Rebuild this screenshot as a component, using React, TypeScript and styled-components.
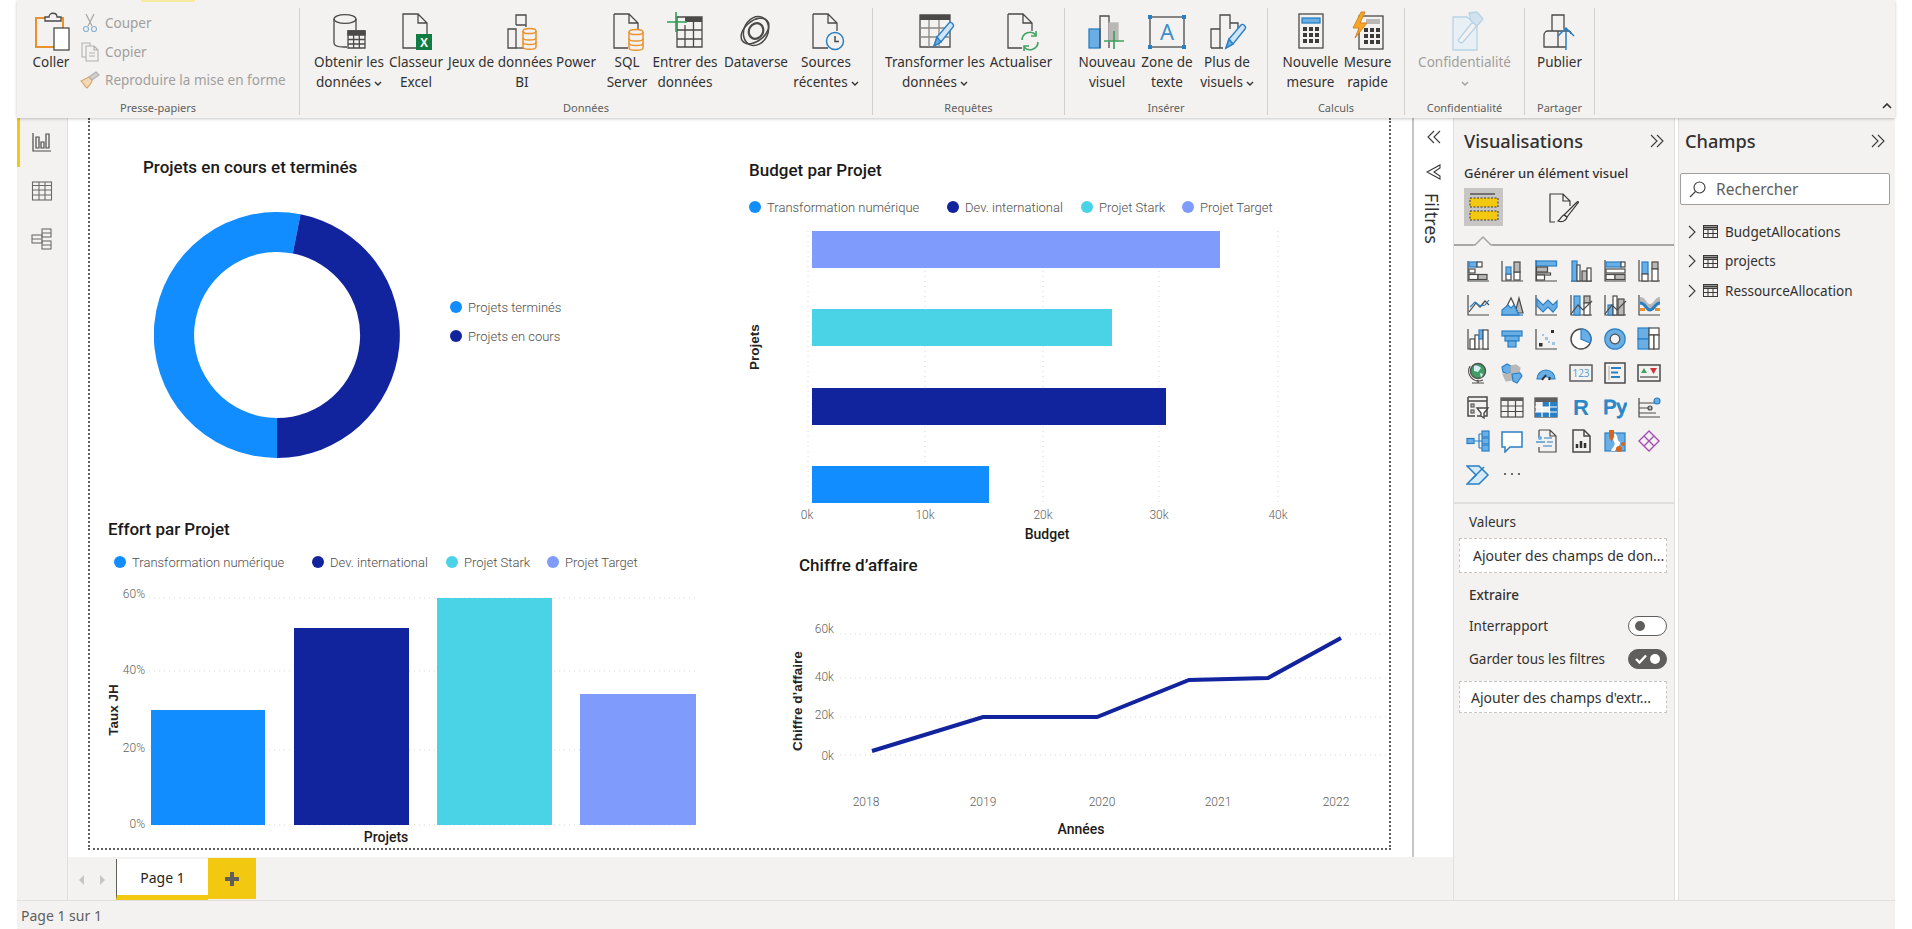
import React from "react";
import styled, { createGlobalStyle } from "styled-components";

const ink = "#4b4a49";
const sky = "#69afe5";
const skyLine = "#2a7fc4";
const ash = "#bab8b6";
const amber = "#e8912d";
const chartBlue = "#118dff";
const chartNavy = "#12239e";
const chartCyan = "#4ad2e6";
const chartPeri = "#7f9bfb";
const yellow = "#f2c811";

const GlobalStyle = createGlobalStyle`
  html, body {
    margin: 0;
    width: 1912px;
    height: 929px;
    overflow: hidden;
    background: #fff;
    font-family: "Noto Sans", "Open Sans", sans-serif;
    color: #323130;
  }
  * { box-sizing: border-box; }
`;

const ExcelMark = styled.text`
  font-family: "Liberation Sans", sans-serif;
  font-size: 12px;
  font-weight: 700;
  fill: #fff;
  stroke: none;
`;

const TextBoxMark = styled.text`
  font-family: "Noto Sans", sans-serif;
  font-size: 22px;
  fill: #3d8fc9;
  stroke: none;
`;

const VizLetter = styled.text<{ $wide?: boolean }>`
  font-family: "Liberation Sans", sans-serif;
  font-size: ${p => (p.$wide ? 20 : 22)}px;
  font-weight: ${p => (p.$wide ? 400 : 700)};
  fill: #2b88c8;
  stroke: ${p => (p.$wide ? "#2b88c8" : "none")};
`;

const CardDigits = styled.text`
  font-family: "Noto Sans", sans-serif;
  font-size: 10px;
  fill: #5b9fd4;
  stroke: none;
`;

const B = (x: number, y: number, w: number, h: number) => <rect x={x} y={y} width={w} height={h} fill={sky} stroke={skyLine} />;
const G = (x: number, y: number, w: number, h: number) => <rect x={x} y={y} width={w} height={h} fill={ash} />;
const W = (x: number, y: number, w: number, h: number) => <rect x={x} y={y} width={w} height={h} fill="#fff" />;
const docPath = "M7 3h15l9 9v25H7z M22 3v9h9";
const axes = <path d="M2 2v20h21" />;

function Cylinder({ x, y, w, h, color }: { x: number; y: number; w: number; h: number; color: string }) {
  return (
    <g stroke={color} fill="#f3f2f1" strokeWidth="1.5">
      <path d={`M${x} ${y + 2}v${h - 4}c0 3 ${w} 3 ${w} 0v-${h - 4}`} />
      <ellipse cx={x + w / 2} cy={y + 2} rx={w / 2} ry="2.6" />
      <path d={`M${x} ${y + h / 3 + 2}c0 3 ${w} 3 ${w} 0M${x} ${y + (2 * h) / 3}c0 3 ${w} 3 ${w} 0`} fill="none" />
    </g>
  );
}

function Pencil({ dx = 0, dy = 0 }: { dx?: number; dy?: number }) {
  return (
    <g transform={`translate(${dx} ${dy})`} stroke={skyLine} strokeWidth="1.4">
      <path d="M14 33l3-9L29 10c2-2 6 2 4 4L21 29z" fill="#cfe5f7" />
      <path d="M14 33l3-9 4 5z" fill={sky} />
    </g>
  );
}

const ribbonIcons = {
  getData: (
    <>
      <path d="M5 8v24c0 2.4 4 4 10 4h3M27 8v11" />
      <ellipse cx="16" cy="8" rx="11" ry="4.4" />
      <path d="M19 20h17v17H19z" fill="#f3f2f1" />
      <path d="M19 20h17v4H19z" fill={ink} />
      <path d="M19 28.5h17M19 33h17M24.6 24v13M30.3 24v13" />
    </>
  ),
  excel: (
    <>
      <path d={docPath} />
      <rect x="20" y="23" width="16" height="16" fill="#107c41" stroke="none" />
      <ExcelMark x="28" y="35.5" textAnchor="middle">X</ExcelMark>
    </>
  ),
  dataset: (
    <>
      <path d="M14 14V4h10v12M6 18h8v19H6zM14 14h10" />
      <path d="M14 37h8" />
      <Cylinder x={21} y={18} w={13} h={20} color={amber} />
    </>
  ),
  sql: (
    <>
      <path d="M7 3h15l9 9v8M22 3v9h9M7 3v34h14" />
      <Cylinder x={22} y={19} w={14} h={20} color={amber} />
    </>
  ),
  enter: (
    <>
      <path d="M12 6h25v30H12z" />
      <path d="M20 6h17v5H20z" fill={ink} stroke="none" />
      <path d="M12 19h25M12 28h25M20 14v22M28.500 11v25" />
      <path d="M2 11h20M11 1v20" stroke="#2e9e58" strokeWidth="1.6" />
    </>
  ),
  dataverse: (
    <g strokeWidth="1.5">
      <ellipse cx="19" cy="20" rx="16" ry="10" transform="rotate(-40 19 20)" />
      <ellipse cx="20" cy="20" rx="12" ry="15" transform="rotate(25 20 20)" />
      <ellipse cx="20" cy="20" rx="7" ry="8" transform="rotate(30 20 20)" strokeWidth="2.2" />
    </g>
  ),
  recent: (
    <>
      <path d="M7 3h15l9 9v8M22 3v9h9M7 3v34h15" />
      <circle cx="29" cy="30" r="8.500" stroke={skyLine} fill="#f3f2f1" strokeWidth="1.5" />
      <path d="M29 25v5.500h4" strokeWidth="1.5" />
    </>
  ),
  transform: (
    <>
      <path d="M5 4h30v32H5z" />
      <path d="M5 4h30v5H5z" fill={ink} stroke="none" />
      <path d="M5 17h30M5 26h30M14 9v27M24 9v27" stroke="#8a8886" />
      <Pencil dx={5} dy={2} />
    </>
  ),
  refresh: (
    <>
      <path d="M7 3h15l9 9v8M22 3v9h9M7 3v34h14" />
      <g stroke="#3fa35f" strokeWidth="1.6">
        <path d="M21 29a8 8 0 0 1 14-5M35 20v5h-5M37 31a8 8 0 0 1-14 5M23 40v-5h5" />
      </g>
    </>
  ),
  newVisual: (
    <>
      <rect x="2" y="18" width="11" height="19" fill={sky} stroke={skyLine} />
      <path d="M13 37V5h9v32" />
      <rect x="22" y="12" width="9" height="18" fill={ash} stroke={ash} />
      <path d="M17 30h20M27 20v18" stroke="#3fa35f" strokeWidth="1.7" />
    </>
  ),
  textBox: (
    <>
      <rect x="3" y="6" width="34" height="30" />
      <TextBoxMark x="20" y="29" textAnchor="middle">A</TextBoxMark>
      <g fill={skyLine} stroke="none">
        <rect x="1" y="4" width="4" height="4" />
        <rect x="35" y="4" width="4" height="4" />
        <rect x="1" y="34" width="4" height="4" />
        <rect x="35" y="34" width="4" height="4" />
      </g>
    </>
  ),
  moreVisuals: (
    <>
      <path d="M4 37V18h9M13 37V4h10v14M23 12h8v8M4 37h12" />
      <Pencil dx={5} dy={4} />
    </>
  ),
  newMeasure: (
    <>
      <rect x="8" y="3" width="24" height="34" />
      <rect x="11" y="7" width="18" height="5" fill={sky} stroke={skyLine} />
      <g fill="#3b3a39" stroke="none">
        {[16, 22, 28].map(y => [12, 18, 24].map(x => <rect key={`${x}-${y}`} x={x} y={y} width="4" height="4" />))}
      </g>
    </>
  ),
  quickMeasure: (
    <>
      <rect x="11" y="5" width="24" height="33" />
      <rect x="18" y="8" width="14" height="5" fill={ash} stroke="none" />
      <g fill="#3b3a39" stroke="none">
        {[17, 23, 29].map(y => [16, 22, 28].map(x => <rect key={`${x}-${y}`} x={x} y={y} width="4" height="4" />))}
      </g>
      <path d="M13 1L5 17h6L7 27l12-15h-7l5-11z" fill="#f5a623" stroke="#d9822b" strokeWidth="1" />
    </>
  ),
  sensitivity: (
    <g stroke="#b7d3e6">
      <path d="M8 6h14l10 8v25H8z" fill="#e9f0f5" />
      <path d="M14 28l12-15c3-3 7 1 4 4L18 31c-2 2-6-1-4-3z" fill="#f3f2f1" />
      <path d="M24 2l8-1 6 7-6 7-6-5z" fill="#d2e3ef" />
    </g>
  ),
  publish: (
    <>
      <path d="M12 20V4h12v14M4 36V24a4 4 0 0 1 4-4h10v16zM18 20h10a3 3 0 0 1 3 3M4 36h22" />
      <path d="M26 39V17M18 25l8-8 8 8" stroke={skyLine} strokeWidth="1.5" />
    </>
  ),
  paste: (
    <>
      <path d="M14 7H5v29h18" stroke={amber} strokeWidth="2" />
      <path d="M30 7h2v10" stroke={amber} strokeWidth="2" />
      <path d="M14 10V6h4c0-5 8-5 8 0h4v4z" fill="#f3f2f1" />
      <rect x="23" y="17" width="15" height="22" fill="#fff" />
    </>
  ),
};

type BtnDef = { lines: string[]; width: number; icon: React.ReactNode; caret?: boolean; muted?: boolean };

const groups: { label: string; width: number; inset: number; buttons: BtnDef[] }[] = [
  {
    label: "Données",
    width: 573,
    inset: 10,
    buttons: [
      { lines: ["Obtenir les", "données"], width: 78, icon: ribbonIcons.getData, caret: true },
      { lines: ["Classeur", "Excel"], width: 56, icon: ribbonIcons.excel },
      { lines: ["Jeux de données Power", "BI"], width: 156, icon: ribbonIcons.dataset },
      { lines: ["SQL", "Server"], width: 54, icon: ribbonIcons.sql },
      { lines: ["Entrer des", "données"], width: 62, icon: ribbonIcons.enter },
      { lines: ["Dataverse"], width: 80, icon: ribbonIcons.dataverse },
      { lines: ["Sources", "récentes"], width: 60, icon: ribbonIcons.recent, caret: true },
    ],
  },
  {
    label: "Requêtes",
    width: 192,
    inset: 7,
    buttons: [
      { lines: ["Transformer les", "données"], width: 110, icon: ribbonIcons.transform, caret: true },
      { lines: ["Actualiser"], width: 62, icon: ribbonIcons.refresh },
    ],
  },
  {
    label: "Insérer",
    width: 203,
    inset: 12,
    buttons: [
      { lines: ["Nouveau", "visuel"], width: 60, icon: ribbonIcons.newVisual },
      { lines: ["Zone de", "texte"], width: 60, icon: ribbonIcons.textBox },
      { lines: ["Plus de", "visuels"], width: 60, icon: ribbonIcons.moreVisuals, caret: true },
    ],
  },
  {
    label: "Calculs",
    width: 137,
    inset: 14,
    buttons: [
      { lines: ["Nouvelle", "mesure"], width: 57, icon: ribbonIcons.newMeasure },
      { lines: ["Mesure", "rapide"], width: 57, icon: ribbonIcons.quickMeasure },
    ],
  },
  {
    label: "Confidentialité",
    width: 120,
    inset: 0,
    buttons: [{ lines: ["Confidentialité", ""], width: 119, icon: ribbonIcons.sensitivity, caret: true, muted: true }],
  },
  {
    label: "Partager",
    width: 70,
    inset: 0,
    buttons: [{ lines: ["Publier"], width: 69, icon: ribbonIcons.publish }],
  },
];

const vizIcons: React.ReactNode[] = [
  <>{axes}{B(3, 3, 8, 5)}{W(11, 3, 5, 5)}{W(3, 10, 6, 4)}{W(3, 15.5, 9, 5)}{G(12, 15.5, 9, 5)}</>,
  <>{axes}{W(6, 15, 5, 6)}{B(6, 8, 5, 7)}{W(14, 13, 6, 8)}{G(14, 3, 6, 10)}</>,
  <><path d="M2 1v21h21" />{B(2.5, 2, 20, 5)}{G(2.5, 8, 11, 5)}{W(2.500, 14, 14, 2)}{W(2.5, 16, 8, 5)}</>,
  <><path d="M2 22h21" />{B(3, 2, 5, 20)}{W(8, 6, 3, 16)}{G(13, 12, 5, 10)}{W(18, 9, 4, 13)}</>,
  <><path d="M2 1v21h21" />{B(3, 3, 15, 5)}{W(18, 3, 4, 5)}{W(3, 10, 19, 4)}{W(3, 15.500, 9, 5)}{G(12, 15.5, 10, 5)}</>,
  <><path d="M2 1v21h21" />{B(5, 3, 6, 12)}{W(5, 15, 6, 7)}{G(15, 3, 6, 7)}{W(15, 10, 6, 12)}</>,
  <>{axes}<polyline points="3,19 10,10 14,14 19,8 23,12" /><polyline points="4,14 9,9 14,13 19,12 23,7" stroke={skyLine} /></>,
  <><path d="M15 20l4-15 4 15z" fill={ash} /><path d="M3 21L11 5l7 15z" fill="#fff" /><path d="M2 22v-5l6-5 3 3 3-3 5 10z" fill={sky} stroke={skyLine} /><path d="M1 22h22" stroke={skyLine} /></>,
  <>{axes}<path d="M3 6l6 6 5-5 5 5 4-4v6l-4 5-5-5-5 5-6-6z" fill={sky} stroke={skyLine} /></>,
  <>{axes}{B(5, 3, 6, 19)}{G(15, 3, 6, 7)}{W(15, 10, 6, 12)}<polyline points="2,21 9,12 14,17 23,8" fill="none" /></>,
  <>{axes}{B(5, 12, 5, 10)}{W(10, 3, 4, 19)}{G(15, 6, 6, 16)}<polyline points="2,21 9,12 14,17 23,8" fill="none" /></>,
  <>{axes}<path d="M3 4c6 0 6 7 10 7s5-7 10-7v5c-5 0-6 7-10 7S9 9 3 9z" fill={ash} stroke="none" /><path d="M3 10c6 0 6 7 10 7s5-7 10-7" stroke={skyLine} strokeWidth="3" /><rect x="3" y="15" width="5" height="3" fill={amber} stroke="none" /><rect x="18" y="15" width="5" height="3" fill={amber} stroke="none" /></>,
  <>{axes}{W(4, 12, 5, 10)}{W(9, 8, 4, 14)}{B(13, 3, 4, 9)}{W(17, 3, 5, 19)}</>,
  <>{B(2, 4, 20, 5)}{B(5, 9, 14, 5)}{B(8, 14, 8, 6)}</>,
  <>{axes}<g stroke="none"><rect x="17" y="3" width="3" height="3" fill="#323130" /><rect x="5" y="16" width="3.500" height="3.500" fill="#323130" /><rect x="8" y="7" width="2" height="2" fill="#9cc6e6" /><rect x="11" y="10" width="3" height="3" fill="#9cc6e6" /><rect x="18" y="15" width="3" height="3" fill="#9cc6e6" /><rect x="14" y="14" width="2" height="2" fill="#9cc6e6" /></g></>,
  <><circle cx="12" cy="12" r="10" fill="#fff" strokeWidth="1.5" /><path d="M12 2a10 10 0 0 1 9 14l-9-4z" fill={sky} stroke={skyLine} /></>,
  <><circle cx="12" cy="12" r="7.5" stroke={sky} strokeWidth="5" /><circle cx="12" cy="12" r="10.200" stroke={skyLine} /><circle cx="12" cy="12" r="4.800" stroke={ink} /></>,
  <>{B(1, 1, 11, 11)}{B(1, 12, 11, 10)}{W(12, 1, 10, 7)}{W(12, 8, 5, 14)}{W(17, 8, 5, 14)}</>,
  <><circle cx="12" cy="10" r="7.500" fill="#3f9e63" stroke="#555" strokeWidth="1.5" /><path d="M8 5c3-1 5 0 7 2l-3 4-4-1z" fill="#d8ecf6" stroke="none" /><path d="M14 12l3 1-2 4z" fill="#d8ecf6" stroke="none" /><path d="M4 5a10 10 0 0 0 13 14M6 22h12M12 19v3" /></>,
  <><path d="M2 6l5-3 4 2v6l-3 2-5-2z" fill={sky} stroke={skyLine} /><path d="M11 5l5-1 4 3-1 5-8 1z" fill={ash} stroke={ash} /><path d="M8 13l3-1 1 7-6 1-3-7z" fill={ash} stroke={ash} /><path d="M12 13l8-1 2 3-5 7-4-2z" fill={sky} stroke={skyLine} /></>,
  <><path d="M3 18a9 9 0 0 1 18 0h-5a4.500 4.500 0 0 0-8 0z" fill={sky} stroke={skyLine} /><path d="M8 19l4-5" stroke="#323130" strokeWidth="2" /><path d="M15 19l1-3" stroke="#323130" strokeWidth="2" /></>,
  <><rect x="1" y="4" width="22" height="16" stroke="#605e5c" strokeWidth="1.5" /><CardDigits x="12" y="16" textAnchor="middle">123</CardDigits></>,
  <><rect x="2" y="2" width="20" height="20" strokeWidth="1.5" /><path d="M6 5v14" stroke={ash} /><path d="M8 7h10M8 11.500h7M8 16h9" stroke={skyLine} strokeWidth="2" /></>,
  <><rect x="1" y="4" width="22" height="16" strokeWidth="1.500" /><path d="M4 12l3-5 3 5z" fill="#3fa35f" stroke="none" /><path d="M13 7h7l-3.500 6z" fill="#d13438" stroke="none" /><path d="M3 16h18" /></>,
  <><path d="M2 2h19v19H11M2 2v19h7M2 6h19" strokeWidth="1.5" /><rect x="5" y="9" width="3" height="3" fill={ash} stroke="#605e5c" /><rect x="5" y="15" width="3" height="3" fill={ash} stroke="#605e5c" /><path d="M11 13h11l-4 5v5l-3-2v-3z" fill="#fff" strokeWidth="1.4" /></>,
  <><rect x="1" y="3" width="22" height="19" /><rect x="1" y="3" width="22" height="3" fill="#605e5c" stroke="none" /><path d="M1 11h22M1 16.500h22M8 6v16M15.500 6v16" /></>,
  <><rect x="1" y="3" width="22" height="19" /><rect x="1" y="3" width="22" height="4" fill="#605e5c" stroke="none" /><rect x="8" y="7" width="15" height="5" fill={skyLine} stroke="none" /><rect x="15" y="12" width="8" height="5" fill={skyLine} stroke="none" /><rect x="1" y="17" width="22" height="5" fill={skyLine} stroke="none" /><path d="M1 12h22M1 17h22M8 7v15M15.500 7v15" stroke="#fff" /></>,
  <VizLetter x="12" y="20" textAnchor="middle">R</VizLetter>,
  <VizLetter x="12" y="19" textAnchor="middle" $wide>Py</VizLetter>,
  <><path d="M2 3v19h21M2 8h15M2 13h10M2 18h17" /><circle cx="20" cy="6" r="3" fill={sky} stroke={skyLine} /><circle cx="13" cy="13" r="2" fill={ash} /></>,
  <><path d="M8 12h5M13 5h4M13 12h4M13 19h4M13 5v14" stroke={skyLine} />{B(1, 9.5, 7, 5)}{B(16, 2, 7, 6)}{B(16, 9, 7, 6)}{B(16, 16, 7, 6)}</>,
  <path d="M2 3h20v15H10l-5 5v-5H2z" stroke={skyLine} strokeWidth="1.500" fill="#fff" />,
  <><path d="M5 1h11l6 6v16H5v-5M16 1v6h6M5 9V1" /><circle cx="6" cy="9" r="2" fill={sky} stroke="none" /><path d="M2 13h9" stroke={skyLine} /><path d="M10 9h8M13 13h6M9 17h9" stroke={skyLine} /></>,
  <><path d="M4 1h11l6 6v16H4zM15 1v6h6" strokeWidth="1.500" /><path d="M8 19v-4M12 19v-7M16 19v-5" stroke="#323130" strokeWidth="2.500" /></>,
  <><rect x="2" y="4" width="20" height="18" fill={sky} stroke={skyLine} /><path d="M12 4c4 4 1 7 5 9 1 3-3 5-5 9H8c2-5 6-6 2-11-1-2 1-5 2-7z" fill="#fff" stroke="none" /><path d="M6 1h5v7l-2.500 5L6 8z" fill="#d9651c" stroke="none" /><circle cx="20" cy="15" r="2" fill="#d9651c" stroke="none" /><circle cx="16" cy="20" r="3" fill="#d9651c" stroke="none" /></>,
  <g stroke="#a64cb8" strokeWidth="1.4"><path d="M12 2l10 10-10 10L2 12zM7 7l10 10M17 7L7 17" /></g>,
  <g stroke={skyLine} strokeWidth="1.500" fill="#d6ebfa"><path d="M1 3h12l9 9-9 9H1l9-9z" /><path d="M10 12L18 4M6 16L13 9" /></g>,
  <g fill={ink} stroke="none"><circle cx="5" cy="11" r="1.100" /><circle cx="12" cy="11" r="1.100" /><circle cx="19" cy="11" r="1.100" /></g>,
];

function Caret() {
  return (
    <CaretSvg viewBox="0 0 8 5" fill="none" stroke="currentColor" strokeWidth="1.400">
      <path d="M1 1l3 3 3-3" />
    </CaretSvg>
  );
}

function DoubleChevron({ flip }: { flip?: boolean }) {
  return (
    <DoubleSvg viewBox="0 0 16 14" fill="none" stroke="#3b3a39" strokeWidth="1.100" $flip={flip}>
      <path d="M2 1l6 6-6 6M8 1l6 6-6 6" />
    </DoubleSvg>
  );
}

function Toggle({ on }: { on?: boolean }) {
  return (
    <ToggleTrack $on={on}>
      {on && (
        <svg width="12" height="10" viewBox="0 0 12 10" fill="none" stroke="#fff" strokeWidth="2.400">
          <path d="M1 5l3.500 3.500L11 1.500" />
        </svg>
      )}
      <ToggleKnob $on={on} />
    </ToggleTrack>
  );
}

function Legend() {
  const entries = [
    [chartBlue, "Transformation numérique"],
    [chartNavy, "Dev. international"],
    [chartCyan, "Projet Stark"],
    [chartPeri, "Projet Target"],
  ];
  return (
    <LegendRow>
      {entries.map(([color, name]) => (
        <LegendEntry key={name}>
          <LegendDot $color={color} />
          {name}
        </LegendEntry>
      ))}
    </LegendRow>
  );
}

function TableGlyph() {
  return (
    <svg width="15" height="13" viewBox="0 0 15 13" fill="none" stroke="#3b3a39">
      <rect x="0.500" y="0.500" width="14" height="12" />
      <path d="M0 4.500h15M0 8.500h15M5 4v9M10 4v9" />
      <path d="M0 2.500h15" strokeWidth="2" />
    </svg>
  );
}

export default function App() {
  return (
    <>
      <GlobalStyle />
      <Shell>
        <Ribbon>
          <TabMark />
          <RibbonGroup $width={283}>
            <GroupBody $inset={8}>
              <RibbonButton $width={52}>
                <IconSlot>
                  <RibbonSvg viewBox="0 0 40 40" fill="none" stroke={ink} strokeWidth="1.300">{ribbonIcons.paste}</RibbonSvg>
                </IconSlot>
                Coller
              </RibbonButton>
              <SmallColumn>
                <SmallAction>
                  <SmallIcon viewBox="0 0 18 20" fill="none" stroke="#a8a6a4" strokeWidth="1.200">
                    <path d="M5 1l6 12M13 1L7 13" />
                    <circle cx="5" cy="16" r="2.500" stroke="#8cb4d2" />
                    <circle cx="13" cy="16" r="2.500" stroke="#8cb4d2" />
                  </SmallIcon>
                  Couper
                </SmallAction>
                <SmallAction>
                  <SmallIcon viewBox="0 0 18 20" fill="none" stroke="#b3b0ad" strokeWidth="1.100">
                    <path d="M5 15H1V1h8v3" />
                    <path d="M5 4h8l4 4v11H5zM13 4v4h4M8 11h6M8 14h6" />
                  </SmallIcon>
                  Copier
                </SmallAction>
                <SmallAction>
                  <SmallIcon viewBox="0 0 20 18" fill="none" stroke="#b3b0ad" strokeWidth="1.100">
                    <path d="M12 9l-3-3L1 10c2 1 3 5 6 7 2-2 5-5 5-8z" fill="#f1d9b8" stroke="#d8a86a" />
                    <path d="M9 6l7-5 3 3-7 5z" fill="#d2d0ce" />
                  </SmallIcon>
                  Reproduire la mise en forme
                </SmallAction>
              </SmallColumn>
            </GroupBody>
            <GroupLabel>Presse-papiers</GroupLabel>
          </RibbonGroup>
          {groups.map(group => (
            <RibbonGroup key={group.label} $width={group.width}>
              <GroupBody $inset={group.inset}>
                {group.buttons.map(btn => (
                  <RibbonButton key={btn.lines[0]} $width={btn.width} $muted={btn.muted}>
                    <IconSlot>
                      <RibbonSvg viewBox="0 0 40 40" fill="none" stroke={ink} strokeWidth="1.300">{btn.icon}</RibbonSvg>
                    </IconSlot>
                    {btn.lines.map((line, i) => (
                      <ButtonLine key={i}>
                        {line}
                        {btn.caret && i === btn.lines.length - 1 && <Caret />}
                      </ButtonLine>
                    ))}
                  </RibbonButton>
                ))}
              </GroupBody>
              <GroupLabel>{group.label}</GroupLabel>
            </RibbonGroup>
          ))}
          <Collapse viewBox="0 0 10 6" fill="none" stroke="#323130" strokeWidth="1.600">
            <path d="M1 5l4-4 4 4" />
          </Collapse>
        </Ribbon>

        <Main>
          <NavRail>
            <NavItem $active>
              <svg width="22" height="22" viewBox="0 0 22 22" fill="none" stroke="#4b4a49" strokeWidth="1.200">
                <path d="M2 2v18h18M5 6h3v11H5zM10 11h3v6h-3zM15 3h3v14h-3z" />
              </svg>
            </NavItem>
            <NavItem>
              <svg width="22" height="22" viewBox="0 0 22 22" fill="none" stroke="#6d6b69" strokeWidth="1.100">
                <rect x="1.500" y="2" width="19" height="18" />
                <path d="M1.500 5.500h19M1.500 10h19M1.500 15h19M8 2v18M14 2v18" />
              </svg>
            </NavItem>
            <NavItem>
              <svg width="24" height="24" viewBox="0 0 24 24" fill="none" stroke="#6d6b69" strokeWidth="1.100">
                <rect x="2" y="8" width="10" height="8" />
                <rect x="12" y="2" width="9" height="8" />
                <rect x="12" y="14" width="9" height="8" />
                <path d="M2 12h10M12 6h9M12 18h9" />
              </svg>
            </NavItem>
          </NavRail>

          <Workspace>
            <CanvasRow>
              <Canvas>
                <ReportPage>
                  <LeftColumn>
                    <DonutVisual>
                      <VisualTitle>Projets en cours et terminés</VisualTitle>
                      <DonutRow>
                        <DonutSvg viewBox="0 0 246 246">
                          <path d="M146.500 2.300A123 123 0 1 0 123 246L123 206A83 83 0 1 1 138.800 41.500Z" fill={chartBlue} />
                          <path d="M146.500 2.300A123 123 0 0 1 123 246L123 206A83 83 0 0 0 138.800 41.500Z" fill={chartNavy} />
                        </DonutSvg>
                        <DonutLegend>
                          <LegendEntry>
                            <LegendDot $color={chartBlue} />
                            Projets terminés
                          </LegendEntry>
                          <LegendEntry>
                            <LegendDot $color={chartNavy} />
                            Projets en cours
                          </LegendEntry>
                        </DonutLegend>
                      </DonutRow>
                    </DonutVisual>

                    <EffortVisual>
                      <VisualTitle>Effort par Projet</VisualTitle>
                      <Legend />
                      <ChartSvg width="610" height="261" viewBox="90 585 610 261">
                        {[596, 669, 748, 823].map(y => (
                          <GridLine key={y} x1="149" x2="696" y1={y} y2={y} />
                        ))}
                        <rect x="151" y="708" width="114" height="115" fill={chartBlue} />
                        <rect x="294" y="626" width="115" height="197" fill={chartNavy} />
                        <rect x="437" y="596" width="115" height="227" fill={chartCyan} />
                        <rect x="580" y="692" width="116" height="131" fill={chartPeri} />
                        <AxisTick x="145" y="596" textAnchor="end">60%</AxisTick>
                        <AxisTick x="145" y="672" textAnchor="end">40%</AxisTick>
                        <AxisTick x="145" y="750" textAnchor="end">20%</AxisTick>
                        <AxisTick x="145" y="826" textAnchor="end">0%</AxisTick>
                        <SideTitle transform="translate(118 708) rotate(-90)" textAnchor="middle">Taux JH</SideTitle>
                        <AxisTitle x="386" y="840" textAnchor="middle">Projets</AxisTitle>
                      </ChartSvg>
                    </EffortVisual>
                  </LeftColumn>

                  <RightColumn>
                    <BudgetVisual>
                      <VisualTitle>Budget par Projet</VisualTitle>
                      <Legend />
                      <ChartSvg width="689" height="325" viewBox="700 222 689 325">
                        {[808, 925, 1043, 1159, 1278].map(x => (
                          <GridLine key={x} x1={x} x2={x} y1="231" y2="505" />
                        ))}
                        <rect x="812" y="231" width="408" height="37" fill={chartPeri} />
                        <rect x="812" y="309" width="300" height="37" fill={chartCyan} />
                        <rect x="812" y="388" width="354" height="37" fill={chartNavy} />
                        <rect x="812" y="466" width="177" height="37" fill={chartBlue} />
                        {[[807, "0k"], [925, "10k"], [1043, "20k"], [1159, "30k"], [1278, "40k"]].map(([x, label]) => (
                          <AxisTick key={label} x={x} y="519" textAnchor="middle">{label}</AxisTick>
                        ))}
                        <AxisTitle x="1047" y="539" textAnchor="middle">Budget</AxisTitle>
                        <SideTitle transform="translate(759 347) rotate(-90)" textAnchor="middle">Projets</SideTitle>
                      </ChartSvg>
                    </BudgetVisual>

                    <RevenueVisual>
                      <VisualTitle>Chiffre d’affaire</VisualTitle>
                      <ChartSvg width="689" height="268" viewBox="700 580 689 268">
                        {[634, 678, 717, 755].map(y => (
                          <GridLine key={y} x1="840" x2="1389" y1={y} y2={y} />
                        ))}
                        <polyline points="872,751 983,717 1097,717 1189,680 1268,678 1341,638" fill="none" stroke={chartNavy} strokeWidth="4" />
                        <AxisTick x="834" y="633" textAnchor="end">60k</AxisTick>
                        <AxisTick x="834" y="681" textAnchor="end">40k</AxisTick>
                        <AxisTick x="834" y="719" textAnchor="end">20k</AxisTick>
                        <AxisTick x="834" y="760" textAnchor="end">0k</AxisTick>
                        {[[866, "2018"], [983, "2019"], [1102, "2020"], [1218, "2021"], [1336, "2022"]].map(([x, label]) => (
                          <AxisTick key={label} x={x} y="806" textAnchor="middle">{label}</AxisTick>
                        ))}
                        <AxisTitle x="1081" y="834" textAnchor="middle">Années</AxisTitle>
                        <SideTitle transform="translate(802 701) rotate(-90)" textAnchor="middle">Chiffre d’affaire</SideTitle>
                      </ChartSvg>
                    </RevenueVisual>
                  </RightColumn>
                </ReportPage>
              </Canvas>
              <FilterRail>
                <DoubleChevron flip />
                <svg width="16" height="16" viewBox="0 0 16 16" fill="none" stroke="#3b3a39" strokeWidth="1.100">
                  <path d="M1 8l13-7v3L8 8l6 4v3z" />
                </svg>
                <FilterText>Filtres</FilterText>
              </FilterRail>
            </CanvasRow>
            <TabBar>
              <PagerArrows>
                <svg width="6" height="10" viewBox="0 0 6 10" fill="#c8c6c4"><path d="M5 0v10L0 5z" /></svg>
                <svg width="6" height="10" viewBox="0 0 6 10" fill="#c8c6c4"><path d="M1 0v10l5-5z" /></svg>
              </PagerArrows>
              <PageTab>Page 1</PageTab>
              <AddPage>
                <svg width="16" height="16" viewBox="0 0 16 16" fill="#605e5c"><path d="M6 1h4v5h5v4h-5v5H6v-5H1V6h5z" /></svg>
              </AddPage>
            </TabBar>
          </Workspace>

          <VizPanel>
            <PanelHeader>
              Visualisations
              <DoubleChevron />
            </PanelHeader>
            <BuildLabel>Générer un élément visuel</BuildLabel>
            <PaneTabs>
              <ActivePane>
                <svg width="30" height="30" viewBox="0 0 30 30" fill="none">
                  <path d="M1 2h25" stroke="#3b3a39" strokeWidth="1.200" />
                  <rect x="1" y="6" width="28" height="9" fill={yellow} stroke="#3b3a39" strokeDasharray="2 1.500" />
                  <rect x="1" y="19" width="28" height="9" fill={yellow} stroke="#3b3a39" strokeDasharray="2 1.500" />
                </svg>
              </ActivePane>
              <FormatPane>
                <svg width="30" height="30" viewBox="0 0 30 30" fill="none" stroke="#3b3a39" strokeWidth="1.200">
                  <path d="M6 29H1V1h13l7 7v5M14 1v7h7" />
                  <path d="M15 22L28 9c1-1 2 0 1 1L18 24z" />
                  <path d="M15 22c-3 1-3 4-6 6 3 1 8 1 9-4z" />
                </svg>
              </FormatPane>
              <PaneNotch width="20" height="11" viewBox="0 0 20 11">
                <path d="M0 10h2l8-8 8 8h2v2H0z" fill="#f3f2f1" stroke="none" />
                <path d="M0 10h2l8-8 8 8h2" fill="none" stroke="#a8a6a4" strokeWidth="1.500" />
              </PaneNotch>
            </PaneTabs>
            <VizGrid>
              {vizIcons.map((icon, i) => (
                <VizCell key={i}>
                  <VizSvg viewBox="0 0 24 24" fill="none" stroke={ink} strokeWidth="1.200">{icon}</VizSvg>
                </VizCell>
              ))}
            </VizGrid>
            <Wells>
              <WellLabel>Valeurs</WellLabel>
              <DropBox $height={35} $inset={13}>Ajouter des champs de don...</DropBox>
              <WellHeading>Extraire</WellHeading>
              <SwitchRow>
                Interrapport
                <Toggle />
              </SwitchRow>
              <SwitchRow>
                Garder tous les filtres
                <Toggle on />
              </SwitchRow>
              <DropBox $height={32} $inset={11} $gap>Ajouter des champs d'extr...</DropBox>
            </Wells>
          </VizPanel>

          <FieldsPanel>
            <FieldsHeader>
              Champs
              <DoubleChevron />
            </FieldsHeader>
            <SearchBox>
              <svg width="17" height="17" viewBox="0 0 17 17" fill="none" stroke="#3b3a39" strokeWidth="1.100">
                <circle cx="10.500" cy="6.500" r="5.500" />
                <path d="M6.500 10.500L1 16" />
              </svg>
              Rechercher
            </SearchBox>
            {["BudgetAllocations", "projects", "RessourceAllocation"].map(name => (
              <TreeRow key={name}>
                <svg width="8" height="14" viewBox="0 0 8 14" fill="none" stroke="#3b3a39" strokeWidth="1.100">
                  <path d="M1 1l6 6-6 6" />
                </svg>
                <TableGlyph />
                {name}
              </TreeRow>
            ))}
          </FieldsPanel>
        </Main>

        <StatusBar>Page 1 sur 1</StatusBar>
      </Shell>
    </>
  );
}

const Shell = styled.div`
  width: 1912px;
  height: 929px;
  padding: 0 17px;
  display: flex;
  flex-direction: column;
  background: #fff;
`;

const Ribbon = styled.div`
  position: relative;
  z-index: 2;
  height: 118px;
  flex: none;
  display: flex;
  background: #f3f2f1;
  box-shadow: 0 1px 3px rgba(0, 0, 0, 0.22);
`;

const TabMark = styled.div`
  position: absolute;
  left: 124px;
  top: 0;
  width: 54px;
  height: 2px;
  background: #f7e9a0;
`;

const RibbonGroup = styled.div<{ $width: number }>`
  width: ${p => p.$width}px;
  height: 107px;
  margin-top: 8px;
  flex: none;
  display: flex;
  flex-direction: column;
  border-right: 1px solid #d2d0ce;
`;

const GroupBody = styled.div<{ $inset: number }>`
  height: 95px;
  padding-left: ${p => p.$inset}px;
  display: flex;
`;

const GroupLabel = styled.div`
  font-size: 11px;
  line-height: 15px;
  text-align: center;
  color: #605e5c;
  white-space: nowrap;
`;

const RibbonButton = styled.div<{ $width: number; $muted?: boolean }>`
  width: ${p => p.$width}px;
  flex: none;
  display: flex;
  flex-direction: column;
  align-items: center;
  font-size: 13.5px;
  line-height: 20px;
  color: ${p => (p.$muted ? "#a19f9d" : "#323130")};
  white-space: nowrap;
`;

const ButtonLine = styled.div`
  height: 20px;
  display: flex;
  align-items: center;
  gap: 3px;
`;

const IconSlot = styled.div`
  height: 44px;
  padding-top: 3px;
  flex: none;
`;

const RibbonSvg = styled.svg`
  display: block;
  width: 40px;
  height: 40px;
`;

const CaretSvg = styled.svg`
  width: 8px;
  height: 5px;
  margin-top: 3px;
`;

const SmallColumn = styled.div`
  margin-left: 3px;
  padding-top: 1px;
  display: flex;
  flex-direction: column;
`;

const SmallAction = styled.div`
  height: 28.5px;
  display: flex;
  align-items: center;
  gap: 5px;
  font-size: 13.5px;
  color: #a19f9d;
  white-space: nowrap;
`;

const SmallIcon = styled.svg`
  width: 20px;
  height: 20px;
  flex: none;
`;

const Collapse = styled.svg`
  position: absolute;
  right: 3px;
  bottom: 9px;
  width: 10px;
  height: 6px;
`;

const Main = styled.div`
  flex: 1;
  min-height: 0;
  display: flex;
`;

const NavRail = styled.div`
  width: 51px;
  flex: none;
  background: #f3f2f1;
  border-right: 1px solid #e1dfdd;
`;

const NavItem = styled.div<{ $active?: boolean }>`
  height: 48.5px;
  display: flex;
  align-items: center;
  justify-content: center;
  box-shadow: ${p => (p.$active ? `inset 3px 0 0 ${yellow}` : "none")};
`;

const Workspace = styled.div`
  width: 1385px;
  flex: none;
  display: flex;
  flex-direction: column;
`;

const CanvasRow = styled.div`
  height: 739px;
  display: flex;
`;

const Canvas = styled.div`
  width: 1346px;
  padding: 0 21px 7px 20px;
  background: #fff;
  border-right: 2px solid #c8c6c4;
`;

const ReportPage = styled.div`
  height: 100%;
  display: flex;
  border: 2px dotted #605e5c;
  border-top: none;
`;

const LeftColumn = styled.div`
  width: 610px;
  flex: none;
  display: flex;
  flex-direction: column;
`;

const RightColumn = styled.div`
  flex: 1;
  display: flex;
  flex-direction: column;
`;

const VisualTitle = styled.div`
  font-family: Roboto, sans-serif;
  font-size: 17px;
  font-weight: 500;
  line-height: 20px;
  color: #1b1a19;
  white-space: nowrap;
`;

const DonutVisual = styled.div`
  height: 387px;
  padding: 39px 0 0 53px;
`;

const DonutRow = styled.div`
  margin: 35px 0 0 11px;
  display: flex;
`;

const DonutSvg = styled.svg`
  width: 246px;
  height: 246px;
  flex: none;
`;

const DonutLegend = styled.div`
  margin: 87px 0 0 50px;
  display: flex;
  flex-direction: column;
  gap: 13px;
`;

const EffortVisual = styled.div`
  padding: 14px 0 0 18px;
  display: flex;
  flex-direction: column;
  > svg {
    margin-left: -18px;
  }
`;

const BudgetVisual = styled.div`
  padding: 42px 0 0 49px;
  height: 430px;
  display: flex;
  flex-direction: column;
  > svg {
    margin-left: -49px;
  }
`;

const RevenueVisual = styled.div`
  padding: 7px 0 0 99px;
  display: flex;
  flex-direction: column;
  > svg {
    margin: 5px 0 0 -99px;
  }
`;

const LegendRow = styled.div`
  display: grid;
  grid-template-columns: 198px 134px 101px auto;
  margin: 15px 0 17px 6px;
  ${BudgetVisual} & {
    margin: 19px 0 7px 0;
  }
`;

const LegendEntry = styled.div`
  height: 16px;
  display: flex;
  align-items: center;
  gap: 6px;
  font-family: Roboto, sans-serif;
  font-size: 13px;
  font-weight: 300;
  color: #4f4d4b;
  white-space: nowrap;
`;

const LegendDot = styled.span<{ $color: string }>`
  width: 12px;
  height: 12px;
  flex: none;
  border-radius: 50%;
  background: ${p => p.$color};
`;

const ChartSvg = styled.svg`
  display: block;
  flex: none;
`;

const GridLine = styled.line`
  stroke: #d9d8d6;
  stroke-width: 1;
  stroke-dasharray: 1 4;
`;

const AxisTick = styled.text`
  font-family: Roboto, sans-serif;
  font-size: 12px;
  font-weight: 300;
  fill: #605e5c;
`;

const AxisTitle = styled.text`
  font-family: Roboto, sans-serif;
  font-size: 14px;
  font-weight: 500;
  fill: #1b1a19;
`;

const SideTitle = styled.text`
  font-family: "Liberation Sans", sans-serif;
  font-size: 13.5px;
  font-weight: 700;
  fill: #252423;
`;

const FilterRail = styled.div`
  width: 39px;
  flex: none;
  padding-top: 12px;
  display: flex;
  flex-direction: column;
  align-items: center;
  gap: 20px;
  background: #fff;
`;

const FilterText = styled.div`
  margin: -7px 4px 0 0;
  writing-mode: vertical-rl;
  font-size: 18px;
  font-weight: 400;
  line-height: 20px;
  color: #323130;
`;

const DoubleSvg = styled.svg<{ $flip?: boolean }>`
  width: 16px;
  height: 14px;
  flex: none;
  transform: ${p => (p.$flip ? "scaleX(-1)" : "none")};
`;

const TabBar = styled.div`
  flex: 1;
  display: flex;
  align-items: flex-end;
  background: #f3f2f1;
`;

const PagerArrows = styled.div`
  width: 48px;
  height: 41px;
  padding: 0 11px;
  display: flex;
  align-items: center;
  justify-content: space-between;
`;

const PageTab = styled.div`
  width: 92px;
  height: 41px;
  display: flex;
  align-items: center;
  justify-content: center;
  background: #fff;
  border-left: 1px solid #605e5c;
  border-bottom: 5px solid ${yellow};
  font-size: 14px;
  color: #252423;
`;

const AddPage = styled.div`
  width: 48px;
  height: 41px;
  margin-bottom: 1px;
  display: flex;
  align-items: center;
  justify-content: center;
  background: ${yellow};
`;

const VizPanel = styled.div`
  width: 222px;
  flex: none;
  padding-top: 11px;
  display: flex;
  flex-direction: column;
  background: #f3f2f1;
  border-left: 1px solid #e1dfdd;
  border-right: 1px solid #e1dfdd;
`;

const PanelHeader = styled.div`
  height: 24px;
  padding: 0 9px 0 10px;
  display: flex;
  align-items: center;
  justify-content: space-between;
  font-size: 18.2px;
  font-weight: 500;
  color: #323130;
`;

const FieldsHeader = styled(PanelHeader)`
  padding-left: 6px;
`;

const BuildLabel = styled.div`
  margin-top: 10px;
  padding-left: 10px;
  font-size: 13px;
  font-weight: 500;
  line-height: 20px;
  color: #323130;
  white-space: nowrap;
`;

const PaneTabs = styled.div`
  position: relative;
  margin-top: 5px;
  padding: 0 0 16px 10px;
  display: flex;
  border-bottom: 2px solid #a8a6a4;
`;

const ActivePane = styled.div`
  width: 39px;
  height: 38px;
  display: flex;
  align-items: center;
  justify-content: center;
  background: #c8c6c4;
`;

const FormatPane = styled.div`
  margin-left: 46px;
  padding-top: 5px;
`;

const PaneNotch = styled.svg`
  position: absolute;
  left: 19px;
  bottom: -2px;
`;

const VizGrid = styled.div`
  padding: 8px 0 10px 7px;
  display: grid;
  grid-template-columns: repeat(6, 34.2px);
  grid-auto-rows: 34px;
  border-bottom: 2px solid #e1dfdd;
`;

const VizCell = styled.div`
  display: flex;
  align-items: center;
  justify-content: center;
`;

const VizSvg = styled.svg`
  width: 24px;
  height: 24px;
  display: block;
`;

const Wells = styled.div`
  padding: 8px 7px 0 5px;
`;

const WellLabel = styled.div`
  padding-left: 10px;
  font-size: 13.5px;
  line-height: 20px;
`;

const WellHeading = styled(WellLabel)`
  margin-top: 12px;
  font-weight: 500;
`;

const DropBox = styled.div<{ $height: number; $inset: number; $gap?: boolean }>`
  height: ${p => p.$height}px;
  margin-top: ${p => (p.$gap ? 12 : 6)}px;
  padding-left: ${p => p.$inset}px;
  display: flex;
  align-items: center;
  background: #fff;
  border: 1px dashed #c8c6c4;
  font-size: 14px;
  white-space: nowrap;
  overflow: hidden;
`;

const SwitchRow = styled.div`
  height: 20px;
  margin-top: 11px;
  padding-left: 10px;
  display: flex;
  align-items: center;
  justify-content: space-between;
  font-size: 13.5px;
  & + & {
    margin-top: 13px;
  }
`;

const ToggleTrack = styled.div<{ $on?: boolean }>`
  width: 39px;
  height: 20px;
  padding: 0 6px;
  display: flex;
  align-items: center;
  justify-content: space-between;
  border-radius: 10px;
  background: ${p => (p.$on ? "#605e5c" : "#fff")};
  border: 1px solid #605e5c;
`;

const ToggleKnob = styled.span<{ $on?: boolean }>`
  width: 10px;
  height: 10px;
  border-radius: 50%;
  background: ${p => (p.$on ? "#fff" : "#605e5c")};
`;

const FieldsPanel = styled.div`
  width: 217px;
  margin-left: 3px;
  flex: none;
  padding-top: 11px;
  display: flex;
  flex-direction: column;
  background: #f3f2f1;
  border-left: 1px solid #e1dfdd;
`;

const SearchBox = styled.div`
  width: 210px;
  height: 32px;
  margin: 20px 0 12px 1px;
  padding-left: 8px;
  display: flex;
  align-items: center;
  gap: 10px;
  background: #fff;
  border: 1px solid #a19f9d;
  border-radius: 2px;
  font-size: 15.5px;
  color: #605e5c;
`;

const TreeRow = styled.div`
  height: 29.5px;
  padding-left: 9px;
  display: flex;
  align-items: center;
  gap: 7px;
  font-size: 13.5px;
  color: #323130;
`;

const StatusBar = styled.div`
  height: 29px;
  flex: none;
  padding-left: 4px;
  display: flex;
  align-items: center;
  background: #f3f2f1;
  border-top: 1px solid #e1dfdd;
  font-size: 14px;
  color: #605e5c;
`;
